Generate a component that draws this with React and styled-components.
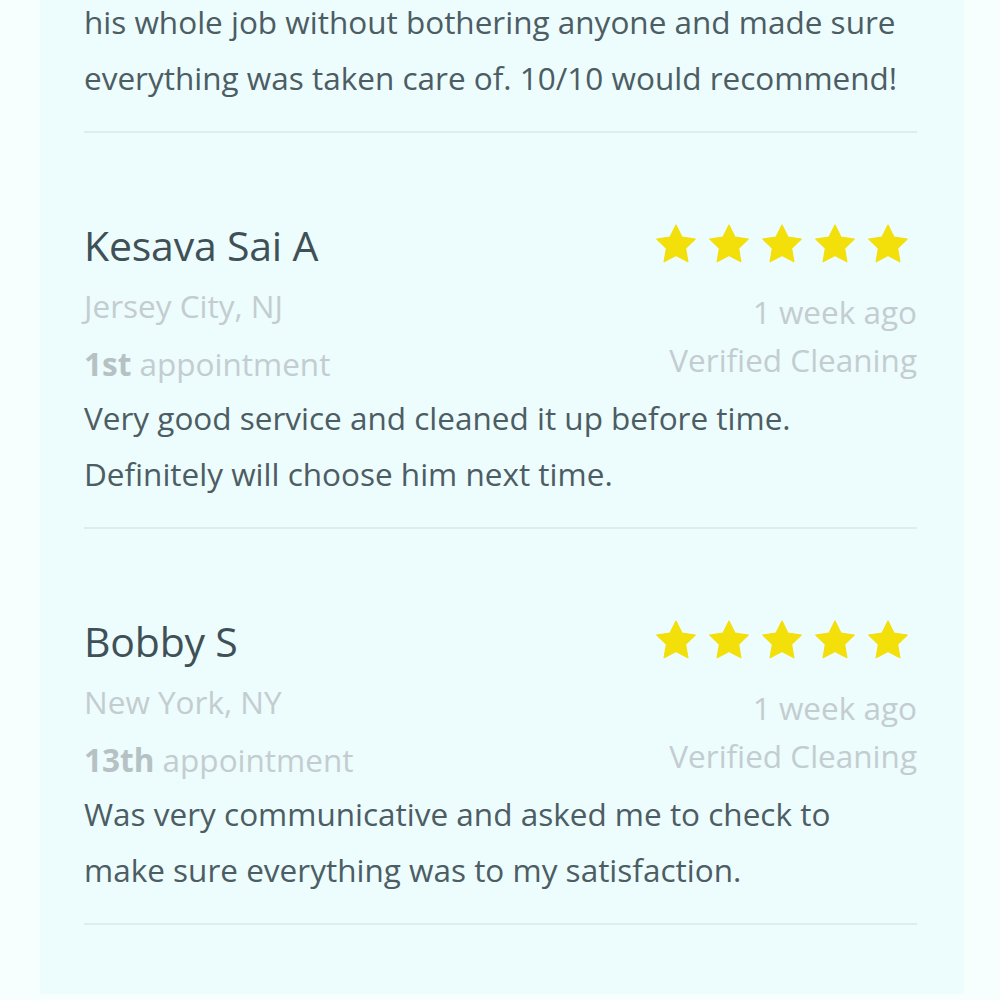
import React from 'react'
import styled, { createGlobalStyle } from 'styled-components'

const reviews = [
    {
        name: 'Kesava Sai A',
        city: 'Jersey City, NJ',
        nth: '1st',
        when: '1 week ago',
        text: ['Very good service and cleaned it up before time.', 'Definitely will choose him next time.'],
    },
    {
        name: 'Bobby S',
        city: 'New York, NY',
        nth: '13th',
        when: '1 week ago',
        text: ['Was very communicative and asked me to check to', 'make sure everything was to my satisfaction.'],
    },
]

function Star() {
    return (
        <StarSvg viewBox="1.6 1.6 20.8 20" aria-hidden="true">
            <polygon points="12,2 15.09,8.26 22,9.27 17,14.14 18.18,21.02 12,17.77 5.82,21.02 7,14.14 2,9.27 8.91,8.26" />
        </StarSvg>
    )
}

export default function App() {
    return (
        <>
            <Global />
            <Page>
                <Card>
                    <Review>
                        <Body $top>
                            his whole job without bothering anyone and made sure<br />
                            everything was taken care of. 10/10 would recommend!
                        </Body>
                    </Review>
                    {reviews.map((r) => (
                        <Review key={r.name}>
                            <Head>
                                <Left>
                                    <Name>{r.name}</Name>
                                    <City>{r.city}</City>
                                    <Appt><b>{r.nth}</b> appointment</Appt>
                                </Left>
                                <Right>
                                    <Stars>
                                        {[0, 1, 2, 3, 4].map((i) => <Star key={i} />)}
                                    </Stars>
                                    <Meta $first>{r.when}</Meta>
                                    <Meta>Verified Cleaning</Meta>
                                </Right>
                            </Head>
                            <Body>
                                {r.text[0]}<br />
                                {r.text[1]}
                            </Body>
                        </Review>
                    ))}
                </Card>
            </Page>
        </>
    )
}

const Global = createGlobalStyle`
    html, body {
        margin: 0;
        padding: 0;
        background: #f6fefe;
    }
    body {
        font-family: "Open Sans", "Noto Sans", sans-serif;
    }
`;

const Page = styled.div`
    height: 1000px;
    overflow: hidden;
    padding: 0 36px 0 40px;
`;

const Card = styled.div`
    background: #edfcfd;
    min-height: 1000px;
    padding: 0 47px 0 44px;
`;

const Review = styled.div`
    border-bottom: 2px solid #dfeced;
    padding-bottom: 25px;
    & + & {
        padding-top: 82px;
    }
`;

const Head = styled.div`
    display: flex;
    justify-content: space-between;
`;

const Left = styled.div`
    display: flex;
    flex-direction: column;
`;

const Right = styled.div`
    display: flex;
    flex-direction: column;
    align-items: flex-end;
`;

const Name = styled.div`
    font-size: 41px;
    line-height: 60px;
    color: #3f5157;
    letter-spacing: -0.2px;
`;

const City = styled.div`
    font-size: 31.5px;
    line-height: 62px;
    color: #c3cdd0;
`;

const Appt = styled.div`
    font-size: 31.5px;
    line-height: 53px;
    color: #c3cdd0;
    b {
        font-weight: 700;
        color: #b6c1c4;
    }
`;

const Stars = styled.div`
    display: flex;
    gap: 13px;
    height: 56px;
    align-items: center;
    margin-right: 9px;
`;

const StarSvg = styled.svg`
    width: 40px;
    height: 39px;
    fill: #f3df0a;
    stroke: #f3df0a;
    stroke-width: 0.6;
    stroke-linejoin: round;
`;

const Meta = styled.div`
    font-size: 31.5px;
    line-height: 48px;
    color: #c3cdd0;
    margin-top: ${(p) => (p.$first ? '17px' : '0')};
`;

const Body = styled.p`
    margin: ${(p) => (p.$top ? '-6px 0 0' : '0')};
    font-size: 31.5px;
    line-height: 56px;
    color: #4c5d63;
    white-space: nowrap;
`;
